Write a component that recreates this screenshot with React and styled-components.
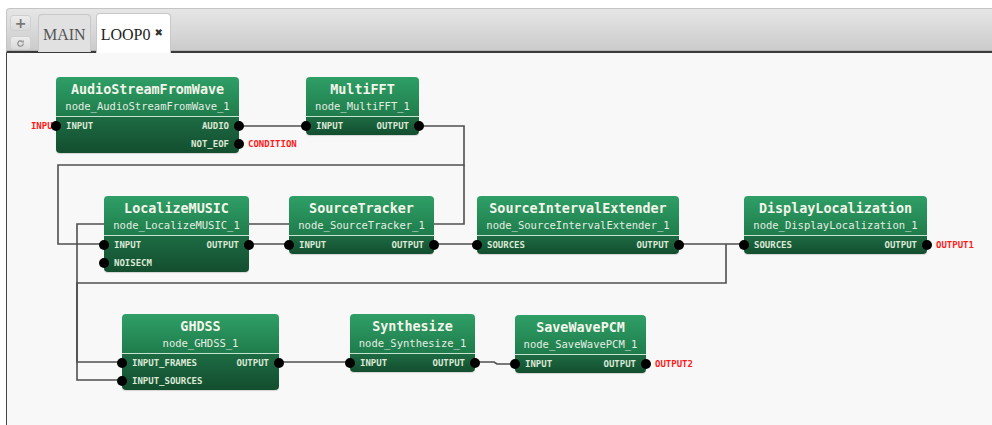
import React from 'react';
import styled, { createGlobalStyle } from 'styled-components';

const GlobalStyle = createGlobalStyle`
  html, body {
    margin: 0;
    padding: 0;
    background: #ffffff;
    overflow: hidden;
  }
`;

// canvas origin in page coordinates
const OX = 7;
const OY = 53;

const Page = styled.div`
  padding-top: 8px;
  padding-left: 6px;
  width: 986px;
  height: 417px;
`;

const TabBar = styled.div`
  display: flex;
  align-items: flex-end;
  height: 45px;
  padding-left: 3px;
  border-top: 1px solid #c4c4c4;
  border-left: 1px solid #c4c4c4;
  border-top-left-radius: 4px;
  border-bottom: 2px solid #3a3a3a;
  box-shadow: inset 0 -1px 0 #b4b4b4;
  background: linear-gradient(#e6e6e6, #cbcbcb);
  box-sizing: border-box;
`;

const ToolColumn = styled.div`
  display: flex;
  flex-direction: column;
  gap: 5px;
  align-self: flex-start;
  margin-top: 6px;
  margin-right: 7px;
`;

const ToolButton = styled.div`
  width: 21px;
  height: ${(p) => p.h}px;
  border-radius: 3px;
  background: linear-gradient(#ececec, #dadada);
  border: 1px solid #d0d0d0;
  box-sizing: border-box;
  display: flex;
  align-items: center;
  justify-content: center;
  color: #777;
  font-family: 'DejaVu Sans', sans-serif;
  font-weight: bold;
  font-size: ${(p) => p.fs}px;
  line-height: 1;
`;

const Tab = styled.div`
  height: ${(p) => (p.active ? 40 : 38)}px;
  padding: 2px ${(p) => (p.active ? 7 : 4)}px 0 4px;
  margin-bottom: ${(p) => (p.active ? -2 : -1)}px;
  margin-right: 5px;
  display: flex;
  align-items: center;
  box-sizing: border-box;
  border: 1px solid #c8c8c8;
  border-bottom: none;
  border-radius: 4px 4px 0 0;
  background: ${(p) => (p.active ? '#ffffff' : '#e1e1e1')};
  font-family: 'Liberation Serif', serif;
  font-size: 16px;
  color: ${(p) => (p.active ? '#222' : '#555')};
`;

const Close = styled.span`
  font-family: 'DejaVu Sans', sans-serif;
  font-size: 10px;
  margin-left: 4px;
  margin-top: -5px;
  color: #333;
`;

const Canvas = styled.div`
  position: relative;
  height: 372px;
  background: #f8f8f8;
  border-left: 1px solid #444;
  overflow: hidden;
`;

const Wires = styled.svg`
  position: absolute;
  left: 0;
  top: 0;
  width: 100%;
  height: 100%;
`;

const NodeBox = styled.div`
  position: absolute;
  border-radius: 4px;
  box-shadow: 0 1px 1px rgba(0, 0, 0, 0.15);
`;

const Header = styled.div`
  height: 40px;
  border-radius: 4px 4px 0 0;
  background: linear-gradient(#2f9f66, #1f7c4c);
  border-bottom: 1px solid #c4e4d0;
  box-sizing: border-box;
  display: flex;
  flex-direction: column;
  align-items: center;
  justify-content: center;
  gap: 3px;
  padding-top: 1px;
`;

const Title = styled.div`
  font-family: 'DejaVu Sans Mono', monospace;
  font-weight: bold;
  font-size: 13.4px;
  line-height: 15px;
  color: #f3f5ea;
  white-space: nowrap;
`;

const Sub = styled.div`
  font-family: 'DejaVu Sans Mono', monospace;
  font-size: 10.5px;
  line-height: 13px;
  color: #e4eee2;
  white-space: nowrap;
`;

const Body = styled.div`
  border-radius: 0 0 4px 4px;
  background: linear-gradient(#1d6b43, #134e2f);
`;

const PortRow = styled.div`
  position: relative;
  height: 18px;
  display: flex;
  align-items: center;
  justify-content: space-between;
  padding: 0 10px;
  font-family: 'DejaVu Sans Mono', monospace;
  font-weight: bold;
  font-size: 9px;
  color: #dce8d6;
  white-space: nowrap;
`;

const Dot = styled.span`
  position: absolute;
  top: 4px;
  ${(p) => (p.side === 'left' ? 'left: -5px;' : 'right: -5px;')}
  width: 10px;
  height: 10px;
  border-radius: 50%;
  background: #000;
  z-index: 2;
`;

const Terminal = styled.span`
  position: absolute;
  top: 4px;
  ${(p) => (p.side === 'left' ? 'right: calc(100% - 2px);' : 'left: calc(100% + 9px);')}
  font-family: 'DejaVu Sans Mono', monospace;
  font-weight: bold;
  font-size: 9px;
  line-height: 10px;
  color: #ff1a1a;
  z-index: 1;
`;

const nodes = [
  { x: 56, y: 77, w: 183, title: 'AudioStreamFromWave', sub: 'node_AudioStreamFromWave_1',
    rows: [
      { l: 'INPUT', r: 'AUDIO', tl: 'INPUT' },
      { r: 'NOT_EOF', tr: 'CONDITION' },
    ] },
  { x: 306, y: 77, w: 113, title: 'MultiFFT', sub: 'node_MultiFFT_1',
    rows: [{ l: 'INPUT', r: 'OUTPUT' }] },
  { x: 104, y: 196, w: 145, title: 'LocalizeMUSIC', sub: 'node_LocalizeMUSIC_1',
    rows: [{ l: 'INPUT', r: 'OUTPUT' }, { l: 'NOISECM' }] },
  { x: 289, y: 196, w: 145, title: 'SourceTracker', sub: 'node_SourceTracker_1',
    rows: [{ l: 'INPUT', r: 'OUTPUT' }] },
  { x: 477, y: 196, w: 202, title: 'SourceIntervalExtender', sub: 'node_SourceIntervalExtender_1',
    rows: [{ l: 'SOURCES', r: 'OUTPUT' }] },
  { x: 744, y: 196, w: 183, title: 'DisplayLocalization', sub: 'node_DisplayLocalization_1',
    rows: [{ l: 'SOURCES', r: 'OUTPUT', tr: 'OUTPUT1' }] },
  { x: 122, y: 314, w: 157, title: 'GHDSS', sub: 'node_GHDSS_1',
    rows: [{ l: 'INPUT_FRAMES', r: 'OUTPUT' }, { l: 'INPUT_SOURCES' }] },
  { x: 350, y: 314, w: 125, title: 'Synthesize', sub: 'node_Synthesize_1',
    rows: [{ l: 'INPUT', r: 'OUTPUT' }] },
  { x: 515, y: 315, w: 131, title: 'SaveWavePCM', sub: 'node_SaveWavePCM_1',
    rows: [{ l: 'INPUT', r: 'OUTPUT', tr: 'OUTPUT2' }] },
];

// wire paths in page coordinates
const wires = [
  [[239, 126], [306, 126]],
  [[419, 126], [464, 126], [464, 165], [58, 165], [58, 244], [104, 244]],
  [[464, 165], [464, 224], [77, 224], [77, 362], [122, 362]],
  [[249, 244], [289, 244]],
  [[434, 244], [477, 244]],
  [[679, 244], [744, 244]],
  [[726, 244], [726, 283], [77, 283], [77, 380], [122, 380]],
  [[279, 362], [350, 362]],
  [[475, 362], [494, 362], [497, 364], [515, 364]],
];

const Node = ({ node }) => (
  <NodeBox style={{ left: node.x - OX, top: node.y - OY, width: node.w }}>
    <Header>
      <Title>{node.title}</Title>
      <Sub>{node.sub}</Sub>
    </Header>
    <Body>
      {node.rows.map((row, i) => (
        <PortRow key={i}>
          <span>{row.l || ''}</span>
          <span>{row.r || ''}</span>
          {row.l && <Dot side='left' />}
          {row.r && <Dot side='right' />}
          {row.tl && <Terminal side='left'>{row.tl}</Terminal>}
          {row.tr && <Terminal side='right'>{row.tr}</Terminal>}
        </PortRow>
      ))}
    </Body>
  </NodeBox>
);

const RefreshIcon = () => (
  <svg width='9' height='9' viewBox='0 0 10 10'>
    <path d='M8 5a3 3 0 1 1-1-2.2' fill='none' stroke='#888' strokeWidth='1.3' />
    <path d='M8.6 1.2v2.6H6z' fill='#888' />
  </svg>
);

const App = () => (
  <>
    <GlobalStyle />
    <Page>
      <TabBar>
        <ToolColumn>
          <ToolButton h={16} fs={14}>+</ToolButton>
          <ToolButton h={14} fs={9}>
            <RefreshIcon />
          </ToolButton>
        </ToolColumn>
        <Tab>MAIN</Tab>
        <Tab active>
          LOOP0<Close>✖</Close>
        </Tab>
      </TabBar>
      <Canvas>
        <Wires>
          {wires.map((pts, i) => (
            <polyline
              key={i}
              points={pts.map(([x, y]) => `${x - OX},${y - OY}`).join(' ')}
              fill='none'
              stroke='#4f4f4f'
              strokeWidth='1.6'
            />
          ))}
        </Wires>
        {nodes.map((n) => (
          <Node key={n.title} node={n} />
        ))}
      </Canvas>
    </Page>
  </>
);

export default App;
